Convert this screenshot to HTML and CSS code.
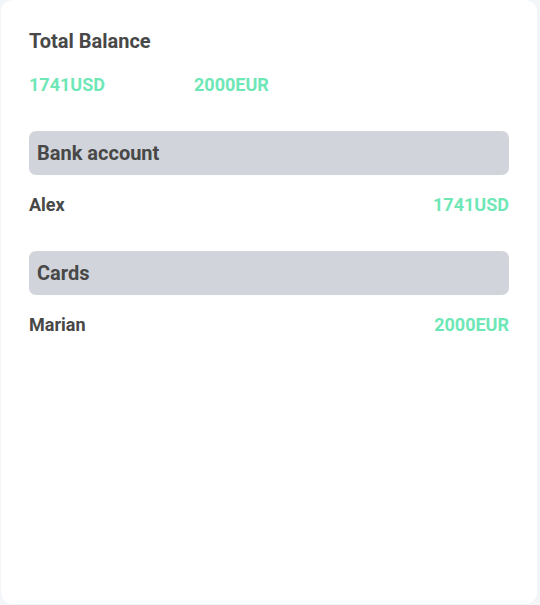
FILE: index.html
```html
<!DOCTYPE html>
<html>
<head>
<meta charset="utf-8">
<link rel="stylesheet" href="styles.css">
</head>
<body>
<div class="card">
  <h2 class="title">Total Balance</h2>
  <div class="totals">
    <span class="amount">1741USD</span>
    <span class="amount">2000EUR</span>
  </div>
  <section class="group">
    <div class="group-head">Bank account</div>
    <div class="row"><span class="name">Alex</span><span class="amount">1741USD</span></div>
  </section>
  <section class="group">
    <div class="group-head">Cards</div>
    <div class="row"><span class="name">Marian</span><span class="amount">2000EUR</span></div>
  </section>
</div>
</body>
</html>
```
FILE: styles.css
```css
html, body {
  margin: 0;
  padding: 0;
  background: #f3f6f9;
  font-family: Roboto, "Liberation Sans", sans-serif;
}
.card {
  box-sizing: border-box;
  margin: 0 3px 0 1px;
  height: 604px;
  background: #ffffff;
  border-radius: 12px;
  padding: 30px 28px 0 28px;
}
.title {
  margin: 0;
  font-size: 20px;
  line-height: 23px;
  font-weight: 700;
  color: #484848;
}
.totals {
  margin-top: 21px;
  display: grid;
  grid-template-columns: 165px auto;
  justify-content: start;
}
.amount {
  font-size: 18px;
  line-height: 21px;
  font-weight: 700;
  color: #6ee7b7;
}
.group {
  margin-top: 36px;
}
.group-head {
  height: 44px;
  display: flex;
  align-items: center;
  padding-left: 8px;
  background: #d1d5db;
  border-radius: 7px;
  font-size: 20px;
  font-weight: 700;
  color: #484848;
}
.row {
  margin-top: 19px;
  display: flex;
  justify-content: space-between;
}
.name {
  font-size: 18px;
  line-height: 21px;
  font-weight: 700;
  color: #484848;
}
```
